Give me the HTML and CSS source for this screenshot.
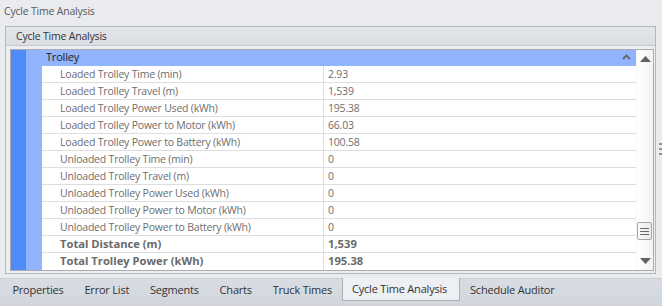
FILE: index.html
```html
<!DOCTYPE html>
<html>

<head>
<title>Cycle Time Analysis</title>
<meta charset="UTF-8">

<link rel="stylesheet" href="styles.css">
</head>

<body>

	<div class="title">Cycle Time Analysis</div>

	<div class="panel">
		<div class="panel-head">Cycle Time Analysis</div>
		<div class="grid">
			<div class="bar"></div>
			<div class="body">
				<div class="category">
					<span>Trolley</span>
					<svg class="chevron" width="9" height="6" viewBox="0 0 9 6"><polyline points="1,5 4.5,1.5 8,5" fill="none" stroke="#6b6b6b" stroke-width="2"/></svg>
				</div>
				<div class="rows">
					<div class="row"><div class="name">Loaded Trolley Time (min)</div><div class="value">2.93</div></div>
					<div class="row"><div class="name">Loaded Trolley Travel (m)</div><div class="value">1,539</div></div>
					<div class="row"><div class="name">Loaded Trolley Power Used (kWh)</div><div class="value">195.38</div></div>
					<div class="row"><div class="name">Loaded Trolley Power to Motor (kWh)</div><div class="value">66.03</div></div>
					<div class="row"><div class="name">Loaded Trolley Power to Battery (kWh)</div><div class="value">100.58</div></div>
					<div class="row"><div class="name">Unloaded Trolley Time (min)</div><div class="value">0</div></div>
					<div class="row"><div class="name">Unloaded Trolley Travel (m)</div><div class="value">0</div></div>
					<div class="row"><div class="name">Unloaded Trolley Power Used (kWh)</div><div class="value">0</div></div>
					<div class="row"><div class="name">Unloaded Trolley Power to Motor (kWh)</div><div class="value">0</div></div>
					<div class="row"><div class="name">Unloaded Trolley Power to Battery (kWh)</div><div class="value">0</div></div>
					<div class="row total"><div class="name">Total Distance (m)</div><div class="value">1,539</div></div>
					<div class="row total"><div class="name">Total Trolley Power (kWh)</div><div class="value">195.38</div></div>
				</div>
			</div>
			<div class="scroll">
				<svg class="arrow" width="11" height="6" viewBox="0 0 11 6"><polygon points="0,6 5.5,0 11,6" fill="#5f5f5f"/></svg>
				<div class="track">
					<div class="thumb">
						<svg width="9" height="7" viewBox="0 0 9 7"><path d="M0 0.5H9M0 3.5H9M0 6.5H9" stroke="#6a6a6a" stroke-width="1"/></svg>
					</div>
				</div>
				<svg class="arrow" width="11" height="6" viewBox="0 0 11 6"><polygon points="0,0 5.5,6 11,0" fill="#5f5f5f"/></svg>
			</div>
		</div>
	</div>

	<div class="grip"><i></i><i></i><i></i></div>

	<nav class="tabs">
		<span class="tab">Properties</span>
		<span class="tab">Error List</span>
		<span class="tab">Segments</span>
		<span class="tab">Charts</span>
		<span class="tab">Truck Times</span>
		<span class="tab active">Cycle Time Analysis</span>
		<span class="tab">Schedule Auditor</span>
	</nav>

</body>
</html>
```

FILE: styles.css
```css
* {
	box-sizing: border-box;
}

body {
	margin: 0;
	width: 662px;
	height: 306px;
	background: #e9ebef;
	font: 10.5px "Open Sans", "Noto Sans", sans-serif;
	letter-spacing: -0.2px;
	color: #555;
	position: relative;
	overflow: hidden;
}

.title {
	height: 26px;
	padding: 3px 0 0 4px;
	line-height: 16px;
	color: #5a5a5a;
}

.panel {
	margin: 0 6px 0 5px;
	height: 248px;
	border: 1px solid #b4b8be;
	background: #eceef1;
}

.panel-head {
	height: 19px;
	padding-left: 10px;
	line-height: 18px;
	color: #333;
	background: linear-gradient(#e3e5e9, #dbdee3);
	border-bottom: 1px solid #c6c9ce;
}

.grid {
	margin: 3px 1px 0 4px;
	height: 222px;
	border: 1px solid #a9adb3;
	background: #fff;
	display: flex;
}

.bar {
	width: 15px;
	background: #4e8bf8;
}

.body {
	flex: 1;
	display: flex;
	flex-direction: column;
}

.category {
	height: 16px;
	background: #91b4fc;
	padding: 0 0 2px 20px;
	line-height: 14px;
	font-size: 11px;
	color: #222;
	display: flex;
	align-items: center;
}

.category span {
	flex: 1;
}

.chevron {
	margin: 0 5px 0 0;
}

.rows {
	flex: 1;
	border-left: 16px solid #91b4fc;
}

.row {
	height: 17px;
	display: flex;
	border-bottom: 1px solid #dedede;
	line-height: 16px;
	color: #6e6e6e;
}

.row .name {
	width: 281px;
	padding-left: 18px;
	white-space: nowrap;
}

.row .value {
	flex: 1;
	padding-left: 4px;
	border-left: 1px solid #dedede;
}

.row.total {
	font-size: 11.2px;
	font-weight: bold;
	letter-spacing: 0;
	color: #6a6a6a;
}

.row:last-child {
	border-bottom: 0;
}

.scroll {
	width: 17px;
	background: linear-gradient(to right, #ffffff, #f2f2f2);
	border-left: 1px solid #f4f4f4;
	display: flex;
	flex-direction: column;
	align-items: center;
	padding: 6px 0 6px;
}

.track {
	flex: 1;
	width: 100%;
	position: relative;
}

.thumb {
	position: absolute;
	left: 0;
	top: 160px;
	width: 15px;
	height: 18px;
	border: 1px solid #a7a7a7;
	border-radius: 2px;
	background: linear-gradient(to right, #fafafa, #e9e9e9);
	display: flex;
	align-items: center;
	justify-content: center;
}

.grip {
	position: absolute;
	left: 659px;
	top: 143px;
	display: flex;
	flex-direction: column;
	gap: 3px;
}

.grip i {
	display: block;
	width: 3px;
	height: 2px;
	background: #8f959d;
}

.tabs {
	margin-top: 4px;
	height: 28px;
	padding-left: 2px;
	border-top: 1px solid #c9ced5;
	background: linear-gradient(#d9dde3, #d1d6dd);
	display: flex;
	align-items: flex-start;
	font-size: 11px;
}

.tab {
	height: 22px;
	padding: 0 10.4px;
	line-height: 21px;
	color: #333;
	white-space: nowrap;
}

.tab.active {
	background: #edeff2;
	border: 1px solid #aab0b8;
	border-top: 0;
	padding: 0 11.5px 0 8.5px;
	margin-top: -1px;
	height: 23px;
}
```
